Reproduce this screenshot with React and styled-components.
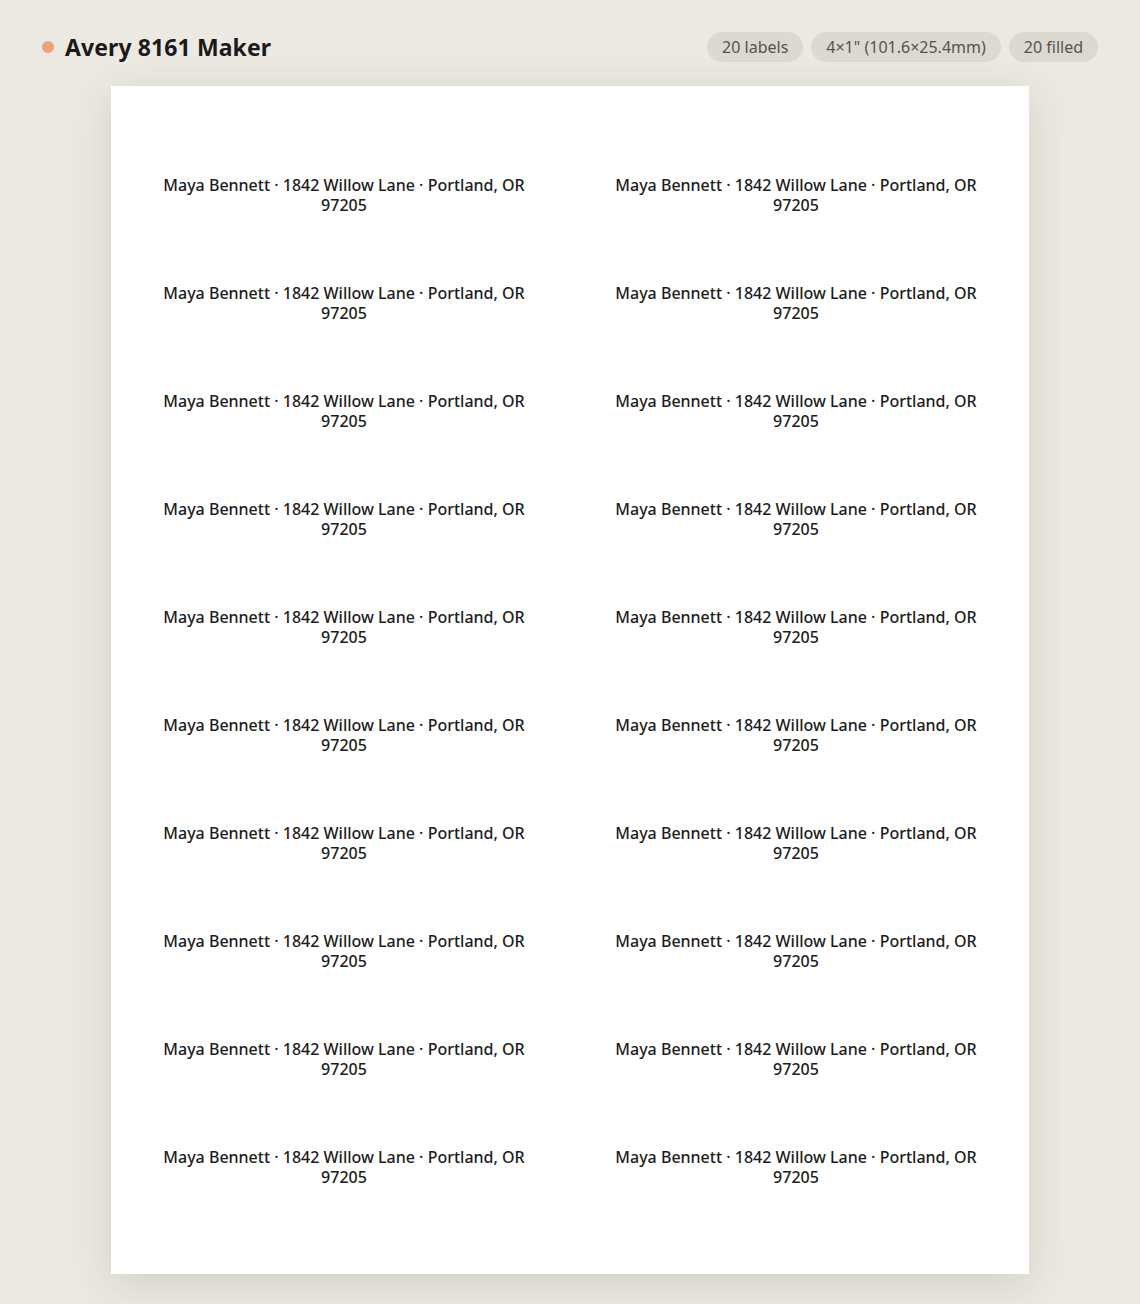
import React from 'react';
import styled, { createGlobalStyle } from 'styled-components';

const GlobalStyle = createGlobalStyle`
  html, body {
    margin: 0;
    padding: 0;
    background: #ece9e3;
  }
  body {
    font-family: 'Noto Sans', 'Open Sans', sans-serif;
    color: #1c1c1c;
  }
`;

const Page = styled.div`
  min-height: 1304px;
  padding: 32px 42px 30px;
  box-sizing: border-box;
  display: flex;
  flex-direction: column;
  align-items: center;
  gap: 24px;
`;

const Header = styled.header`
  width: 100%;
  height: 30px;
  display: flex;
  align-items: center;
  justify-content: space-between;
`;

const Brand = styled.div`
  display: flex;
  align-items: center;
  gap: 11px;
`;

const Dot = styled.span`
  width: 12px;
  height: 12px;
  border-radius: 50%;
  background: #e9a47f;
`;

const Title = styled.h1`
  margin: 0;
  font-size: 23px;
  font-weight: 700;
  color: #1a1a1a;
  letter-spacing: 0.1px;
`;

const Pills = styled.div`
  display: flex;
  gap: 8px;
`;

const Pill = styled.span`
  height: 30px;
  padding: 0 15px;
  display: flex;
  align-items: center;
  border-radius: 15px;
  background: #dcd9d3;
  color: #555350;
  font-size: 16px;
`;

const Sheet = styled.div`
  width: 918px;
  height: 1188px;
  box-sizing: border-box;
  background: #fff;
  padding: 54px 17px;
  display: grid;
  grid-template-columns: repeat(2, 432px);
  grid-auto-rows: 108px;
  column-gap: 20px;
  box-shadow: 0 10px 40px rgba(60, 50, 30, 0.14);
`;

const Label = styled.div`
  padding: 1px 14px 0;
  display: flex;
  align-items: center;
  justify-content: center;
  text-align: center;
  font-size: 16px;
  font-weight: 500;
  line-height: 20px;
  color: #1c1c1c;
`;

const labels = Array.from({ length: 20 }, () => 'Maya Bennett · 1842 Willow Lane · Portland, OR 97205');

export default function App() {
  return (
    <>
      <GlobalStyle />
      <Page>
        <Header>
          <Brand>
            <Dot />
            <Title>Avery 8161 Maker</Title>
          </Brand>
          <Pills>
            <Pill>20 labels</Pill>
            <Pill>4×1" (101.6×25.4mm)</Pill>
            <Pill>20 filled</Pill>
          </Pills>
        </Header>
        <Sheet>
          {labels.map((text, i) => (
            <Label key={i}>{text}</Label>
          ))}
        </Sheet>
      </Page>
    </>
  );
}
